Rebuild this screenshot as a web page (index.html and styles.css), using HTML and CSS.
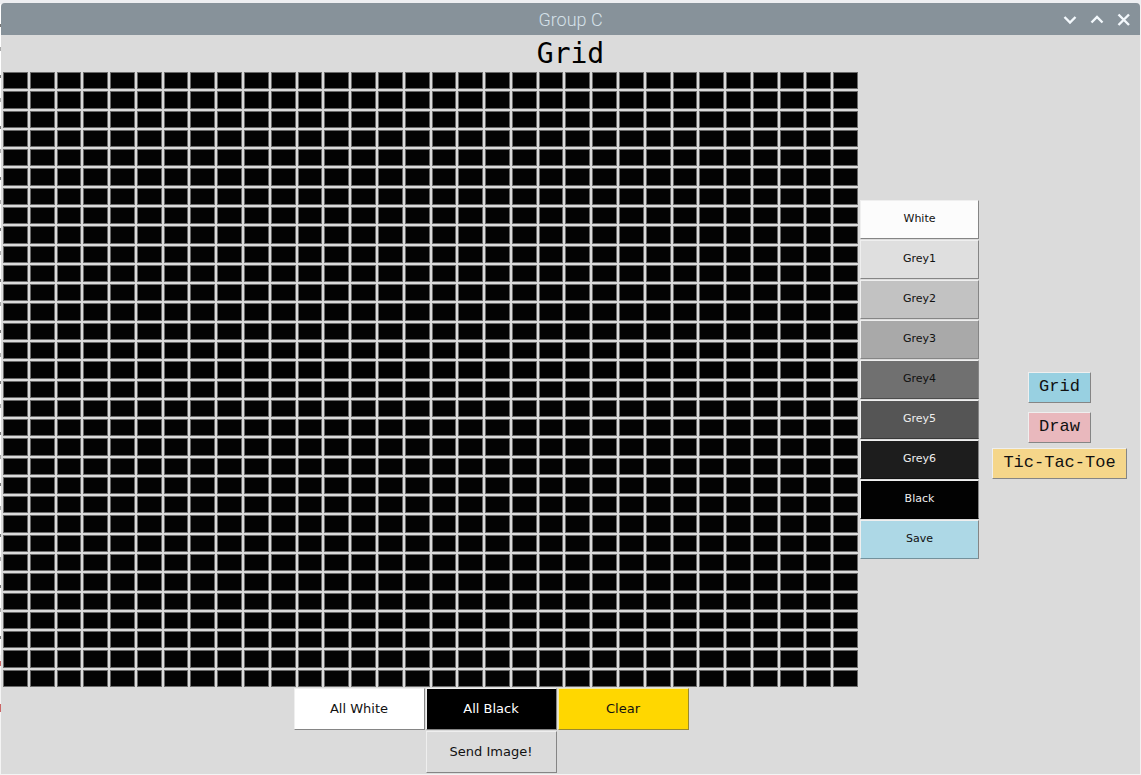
FILE: index.html
```html
<!DOCTYPE html>
<html lang="en">
<head>
<meta charset="utf-8">
<meta name="viewport" content="width=device-width, initial-scale=1">
<title>Group C</title>
<link rel="stylesheet" href="styles.css">
</head>
<body>
<div class="window">
  <header class="titlebar">
    <span class="titlebar-name">Group C</span>
    <div class="titlebar-controls">
      <button class="control" aria-label="Minimize"><svg viewBox="0 0 16 16"><path d="M2.500 5L8 10.500l5.500-5.500"/></svg></button>
      <button class="control" aria-label="Maximize"><svg viewBox="0 0 16 16"><path d="M2.500 10.500L8 5l5.500 5.500"/></svg></button>
      <button class="control" aria-label="Close"><svg viewBox="0 0 16 16"><path d="M2.500 2.500l10.500 10.500M13 2.500L2.500 13"/></svg></button>
    </div>
  </header>
  <h1 class="heading">Grid</h1>
  <div class="content">
    <main class="editor">
      <div class="workspace">
        <div class="pixels" id="pixels"></div>
        <div class="palette">
          <button class="btn swatch white">White</button>
          <button class="btn swatch grey1">Grey1</button>
          <button class="btn swatch grey2">Grey2</button>
          <button class="btn swatch grey3">Grey3</button>
          <button class="btn swatch grey4">Grey4</button>
          <button class="btn swatch grey5">Grey5</button>
          <button class="btn swatch grey6">Grey6</button>
          <button class="btn swatch black">Black</button>
          <button class="btn swatch save">Save</button>
        </div>
      </div>
      <div class="actions">
        <button class="btn action all-white">All White</button>
        <button class="btn action all-black">All Black</button>
        <button class="btn action clear">Clear</button>
        <button class="btn action send">Send Image!</button>
      </div>
    </main>
    <nav class="modes">
      <button class="btn mode mode-grid">Grid</button>
      <button class="btn mode mode-draw">Draw</button>
      <button class="btn mode mode-game">Tic-Tac-Toe</button>
    </nav>
  </div>
</div>
<script src="script.js"></script>
</body>
</html>
```
FILE: styles.css
```css
* {
  box-sizing: border-box;
}

body {
  margin: 0;
  min-height: 100vh;
  display: flex;
  padding: 3px 1px 1px;
  background:
    linear-gradient(#edeef1, #edeef1) 0 0 / 100% 4px no-repeat,
    linear-gradient(#f2f2f2, #f2f2f2) 100% 0 / 1px 100% no-repeat,
    repeating-linear-gradient(#fff 0 24px, #777 24px 27px, #fff 27px 47px, #aaa 47px 51px) 0 0 / 1px 655px no-repeat,
    linear-gradient(#c66, #c66) 0 661px / 1px 5px no-repeat,
    linear-gradient(#c66, #c66) 0 704px / 1px 8px no-repeat,
    #f4f4f4;
  font-family: "DejaVu Sans", sans-serif;
}

button {
  margin: 0;
  padding: 0;
  border: 0;
  font: inherit;
  color: inherit;
}

.window {
  flex: 1;
  display: flex;
  flex-direction: column;
  border-radius: 4px 4px 0 0;
  overflow: hidden;
  background: #dbdbdb;
}

.titlebar {
  height: 32px;
  display: grid;
  grid-template-columns: 1fr auto 1fr;
  align-items: center;
  background: #87929a;
  color: #d5e1e9;
}

.titlebar-name {
  grid-column: 2;
  padding-top: 2px;
  font: 300 18px/30px Roboto, sans-serif;
}

.titlebar-controls {
  display: flex;
  justify-content: flex-end;
  gap: 11px;
  padding: 2px 8px 0 0;
}

.control {
  width: 16px;
  height: 16px;
  background: none;
}

.control svg {
  display: block;
  fill: none;
  stroke: #f3f8fc;
  stroke-width: 2.4;
}

.heading {
  margin: 0;
  font: 28px/37px "DejaVu Sans Mono", monospace;
  text-align: center;
  color: #000;
}

.content {
  flex: 1;
  display: flex;
}

.editor {
  flex: 1;
  display: flex;
  flex-direction: column;
  padding-left: 2px;
}

.workspace {
  flex: 1;
  display: flex;
  gap: 2px;
}

.pixels {
  flex: 1;
  display: grid;
  grid-template-columns: repeat(32, 1fr);
  grid-template-rows: repeat(32, 1fr);
  gap: 2px;
}

.pixel {
  min-width: 0;
  min-height: 0;
  background: #030303;
  border: 1px solid #6a6a6a;
}

.palette {
  width: 119px;
  display: flex;
  flex-direction: column;
  justify-content: center;
  gap: 1px;
}

.btn {
  border: 1px solid;
  border-color: #efefef #858585 #858585 #efefef;
  color: #111;
}

.swatch {
  height: 39px;
  padding-bottom: 2px;
  font-size: 11px;
}

.white { background: #fcfcfc; }
.grey1 { background: #dfdfdf; }
.grey2 { background: #c2c2c2; }
.grey3 { background: #a9a9a9; }
.grey4 { background: #707070; border-bottom-color: #4c4c4c; }
.grey5 { background: #555; color: #eee; border-bottom-color: #383838; }
.grey6 { background: #1d1d1d; color: #eee; border-bottom-color: #111; }
.black { background: #020202; color: #eee; border-bottom-color: #000; }
.save { background: #add8e6; border-bottom-color: #73919c; }

.actions {
  display: grid;
  grid-template-columns: repeat(3, 131px);
  grid-auto-rows: 42px;
  gap: 1px;
  justify-content: center;
  padding: 1px 0;
}

.action {
  padding-bottom: 2px;
  font-size: 13px;
}

.all-white { background: #fff; }
.all-black { background: #000; color: #fff; }
.clear { background: #ffd700; border-color: #efe9b0 #9a8930 #9a8930 #efe9b0; }
.send { grid-column: 2; background: #dbdbdb; }

.modes {
  width: 161px;
  display: flex;
  flex-direction: column;
  align-items: center;
  justify-content: center;
  padding-top: 4px;
}

.mode {
  height: 31px;
  padding: 0 10px 1px;
  font: 17px "Liberation Mono", monospace;
}

.mode-grid { background: #98d0e1; margin-bottom: 9px; }
.mode-draw { background: #e9b8bd; margin-bottom: 5px; }
.mode-game { background: #f5d68a; }
```
FILE: script.js
```js
const pixels = document.getElementById("pixels");
for (let row = 1; row <= 32; row++) {
  for (let column = 1; column <= 32; column++) {
    const pixel = document.createElement("button");
    pixel.className = "pixel";
    pixel.setAttribute("aria-label", `Row ${row}, column ${column}`);
    pixels.append(pixel);
  }
}
```
